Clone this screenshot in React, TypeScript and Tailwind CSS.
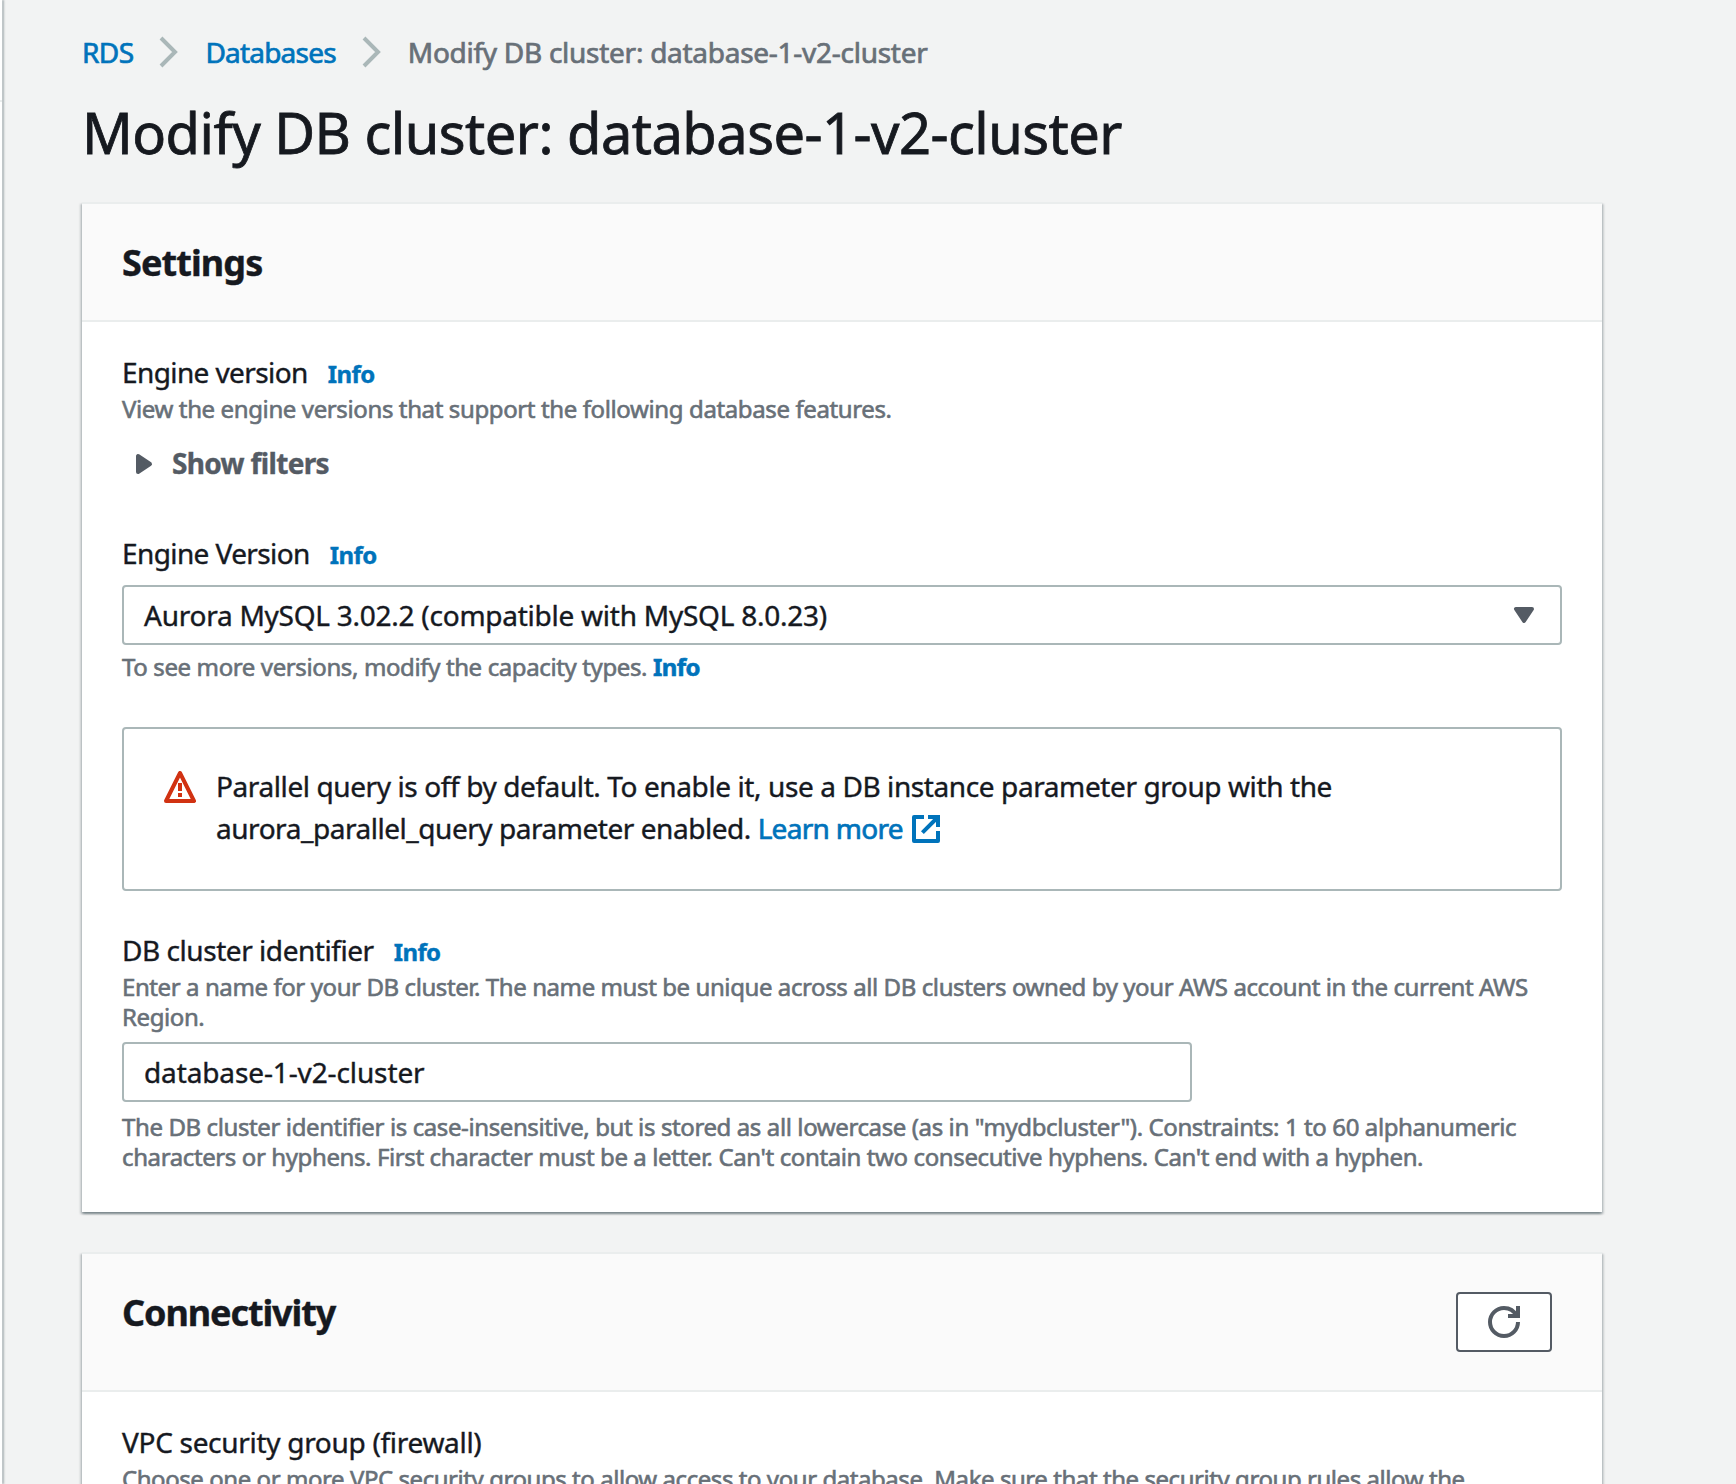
import React from 'react';

interface TextProps {
  children: React.ReactNode;
  className?: string;
}

const ChevronIcon: React.FC = () => (
  <svg viewBox="0 0 16 16" className="mx-5 h-8 w-8 flex-none fill-none stroke-[#aab7b8] stroke-2">
    <path d="m4 1 7 7-7 7" />
  </svg>
);

const WarningIcon: React.FC = () => (
  <svg viewBox="0 0 16 16" className="mt-1.5 h-8 w-8 flex-none fill-none stroke-[#d13212] stroke-2">
    <path strokeLinejoin="round" d="m8 1 7 14H1L8 1z" />
    <path d="M8 6v4M8 11v2" />
  </svg>
);

const ExternalIcon: React.FC = () => (
  <svg viewBox="0 0 16 16" className="ml-[7px] inline-block h-8 w-8 fill-none stroke-[#0073bb] stroke-2 align-[-6px]">
    <path d="M9 2h5v5M6.2 9.8 14 2" />
    <path strokeLinejoin="round" d="M14 9v5H2V2h5" />
  </svg>
);

const RefreshIcon: React.FC = () => (
  <svg viewBox="0 0 16 16" className="h-8 w-8 fill-none stroke-[#545b64] stroke-2">
    <path d="M10 5h5V0" />
    <path d="M15 8c0 3.87-3.13 7-7 7s-7-3.13-7-7 3.13-7 7-7c2.79 0 5.2 1.63 6.33 4" />
  </svg>
);

const Info: React.FC = () => (
  <a href="#" className="text-[24px] leading-none font-bold tracking-[-0.6px] text-[#0073bb]">
    Info
  </a>
);

const Label: React.FC<TextProps & { info?: boolean }> = ({ children, info = true, className = 'tracking-[-0.6px]' }) => (
  <div className="flex items-baseline gap-5 text-[28px] leading-[44px]">
    <span className={className}>{children}</span>
    {info && <Info />}
  </div>
);

const Hint: React.FC<TextProps> = ({ children, className = 'tracking-[-0.38px]' }) => (
  <p className={`text-[24px] leading-[30px] text-[#687078] [-webkit-text-stroke:0.6px] ${className}`}>{children}</p>
);

interface PanelProps {
  title: string;
  titleClassName: string;
  action?: React.ReactNode;
  children: React.ReactNode;
}

const Panel: React.FC<PanelProps> = ({ title, titleClassName, action, children }) => (
  <section className="w-[1520px] border-t-2 border-[#eaeded] bg-white shadow-[0_2px_2px_0_rgba(0,28,36,0.3),2px_2px_2px_0_rgba(0,28,36,0.15),-2px_2px_2px_0_rgba(0,28,36,0.15)]">
    <header className="flex justify-between border-b-2 border-[#eaeded] bg-[#fafafa] pl-10 pr-[50px]">
      <h2 className={`pt-[37px] pb-[35px] text-[36px] leading-[44px] font-bold ${titleClassName}`}>{title}</h2>
      {action}
    </header>
    <div className="px-10 pt-7 pb-10">{children}</div>
  </section>
);

const App: React.FC = () => {
  return (
    <div className="flex h-[1484px] w-[1736px] overflow-hidden bg-[#f2f3f3] font-['Noto_Sans',sans-serif] text-[#16191f] [-webkit-text-stroke:0.4px]">
      <aside className="h-full w-[2px] flex-none bg-white pt-[100px] shadow-[2px_0_2px_0_rgba(0,28,36,0.3)]">
        <div className="h-[2px] bg-[#eaeded]" />
      </aside>

      <main className="pt-[30px] pl-20">
        <nav className="flex items-center text-[28px] leading-[44px] [-webkit-text-stroke:0.7px]">
          <a href="#" className="tracking-[-0.6px] text-[#0073bb]">
            RDS
          </a>
          <ChevronIcon />
          <a href="#" className="tracking-[-0.8px] text-[#0073bb]">
            Databases
          </a>
          <ChevronIcon />
          <span className="tracking-[-0.27px] text-[#687078]">Modify DB cluster: database-1-v2-cluster</span>
        </nav>

        <h1 className="mt-[22px] mb-[34px] text-[56px] leading-[72px] tracking-[-0.53px] [-webkit-text-stroke:0.8px]">
          Modify DB cluster: database-1-v2-cluster
        </h1>

        <div className="flex flex-col gap-10">
          <Panel title="Settings" titleClassName="tracking-[-0.9px]">
            <Label>Engine version</Label>
            <Hint>View the engine versions that support the following database features.</Hint>

            <button className="mt-[17px] flex items-center gap-3 pl-1.5 text-[28px] leading-[44px] font-bold tracking-[-0.65px] text-[#545b64]">
              <svg viewBox="0 0 16 16" className="mt-0.5 h-8 w-8 fill-current stroke-current stroke-2">
                <path strokeLinejoin="round" d="M5 4v8l6-4-6-4z" />
              </svg>
              Show filters
            </button>

            <div className="mt-[46px]">
              <Label>Engine Version</Label>
              <div className="mt-2.5 mb-[7px] flex h-[60px] items-center justify-between rounded-[4px] border-2 border-[#aab7b8] px-5 text-[28px] tracking-[-0.25px]">
                Aurora MySQL 3.02.2 (compatible with MySQL 8.0.23)
                <svg viewBox="0 0 16 16" className="h-8 w-8 fill-[#545b64] stroke-[#545b64] stroke-2">
                  <path strokeLinejoin="round" d="M4 5h8l-4 6-4-6z" />
                </svg>
              </div>
              <Hint>
                To see more versions, modify the capacity types. <Info />
              </Hint>
            </div>

            <div className="mt-[45px] flex gap-5 rounded-[4px] border-2 border-[#aab7b8] px-10 pt-9 pb-10">
              <WarningIcon />
              <p className="text-[28px] leading-[42px] tracking-[-0.4px]">
                Parallel query is off by default. To enable it, use a DB instance parameter group with the
                <br />
                <span className="tracking-[-0.46px]">aurora_parallel_query parameter enabled. </span>
                <a href="#" className="tracking-[-0.7px] text-[#0073bb] [-webkit-text-stroke:0.7px]">
                  Learn more
                  <ExternalIcon />
                </a>
              </p>
            </div>

            <div className="mt-[37px]">
              <Label className="tracking-[-0.45px]">DB cluster identifier</Label>
              <Hint className="tracking-[-0.41px]">
                Enter a name for your DB cluster. The name must be unique across all DB clusters owned by your AWS account in the current AWS
                <br />
                Region.
              </Hint>
              <input
                type="text"
                defaultValue="database-1-v2-cluster"
                className="my-2.5 block h-[60px] w-[1070px] rounded-[4px] border-2 border-[#aab7b8] px-5 text-[28px] tracking-[-0.12px]"
              />
              <Hint className="tracking-[-0.39px]">
                The DB cluster identifier is case-insensitive, but is stored as all lowercase (as in "mydbcluster"). Constraints: 1 to 60 alphanumeric
                <br />
                characters or hyphens. First character must be a letter. Can't contain two consecutive hyphens. Can't end with a hyphen.
              </Hint>
            </div>
          </Panel>

          <Panel
            title="Connectivity"
            titleClassName="tracking-[-1.1px]"
            action={
              <button className="my-[38px] flex h-[60px] w-24 items-center justify-center rounded-[4px] border-2 border-[#545b64] bg-white">
                <RefreshIcon />
              </button>
            }
          >
            <Label info={false} className="tracking-[-0.3px]">
              VPC security group (firewall)
            </Label>
            <Hint className="tracking-[-0.44px]">
              Choose one or more VPC security groups to allow access to your database. Make sure that the security group rules allow the
            </Hint>
          </Panel>
        </div>
      </main>
    </div>
  );
};

export default App;
